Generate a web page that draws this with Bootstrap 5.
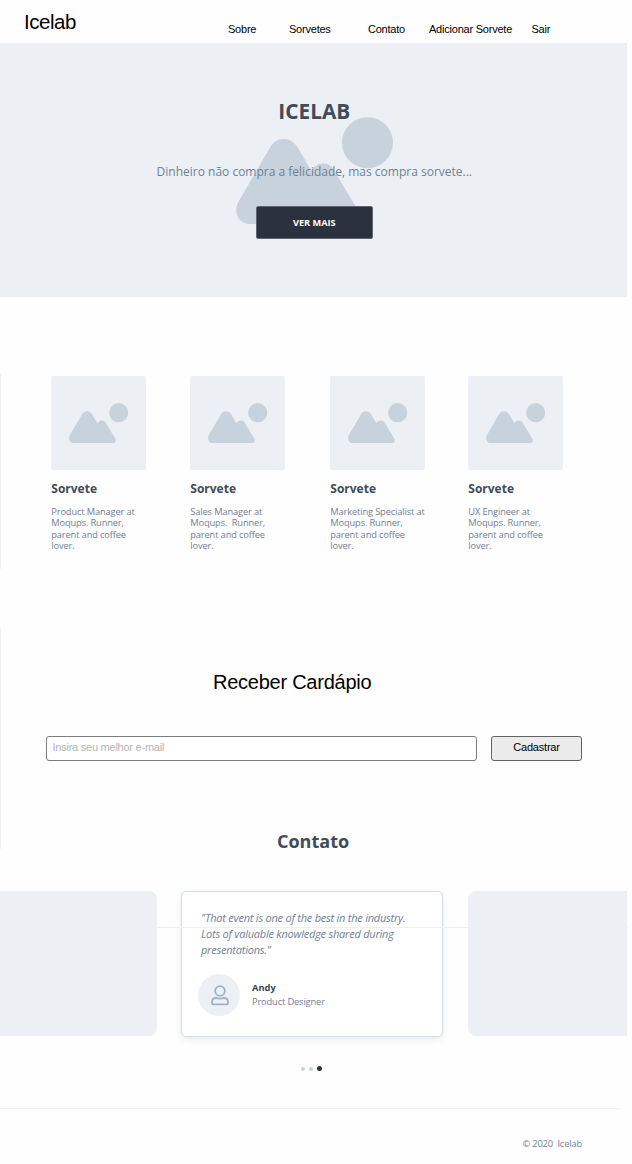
<!DOCTYPE html>
<html lang="pt-br">
<head>
<meta charset="utf-8">
<meta name="viewport" content="width=device-width, initial-scale=1">
<title>Icelab</title>
<link href="https://cdn.jsdelivr.net/npm/bootstrap@5.3.0/dist/css/bootstrap.min.css" rel="stylesheet">
<style>
body{background:#fefefe;font-family:"Open Sans",sans-serif;color:#718096;overflow-x:hidden}
.arial{font-family:"Liberation Sans",Arial,sans-serif;color:#000}
.page{width:627px}
.topbar{height:43px;padding-left:24px}
.brand{font-size:20.5px;line-height:24px;margin-top:10px;width:204px;letter-spacing:-.45px}
.menu{padding-top:22px}
.menu a{font-size:11px;line-height:15px;color:#000;letter-spacing:-.22px;white-space:nowrap}
.menu a:nth-child(1),.menu a:nth-child(3){width:61px}
.menu a:nth-child(2){width:79px}
.menu a:nth-child(4){width:102.5px}
.hero{height:254px;background:#ecf0f4}
.hero-art{left:235.6px;top:74px;width:157px;height:107.3px}
.hero-text{padding-left:1.6px}
.hero h1{font-size:20.8px;line-height:28px;font-weight:700;color:#414b59;margin-top:54px}
.hero p{font-size:12px;line-height:18px;margin-top:38px}
.btn-more{width:117px;height:33px;margin-top:25px;padding:0;background:#2b313d;border:1px solid #5d6672;border-radius:2px;color:#fff;font-size:9.2px;font-weight:700}
.products{margin-top:77px;height:195px;border-left:1px solid #f0f0f0;padding:2px 0 0 50.3px}
.product{width:139px}
.product:nth-child(2){width:140px}
.product:nth-child(3){width:138px}
.thumb{width:94.6px;height:94px;background:#ecf0f4;border-radius:2px;padding:26.700px 0 0 17.5px}
.thumb svg{display:block;width:59.3px;height:40.5px}
.product h2{font-size:12px;line-height:16px;font-weight:700;color:#414b59;margin:11px 0 0}
.product p{font-size:9.3px;line-height:11.4px;margin:9px 0 0;white-space:pre;letter-spacing:-.14px}
.signup{margin-top:59px;height:221px;border-left:1px solid #f0f0f0}
.signup h2{font-size:20px;line-height:24px;margin:42px 0 0 212px;letter-spacing:-.25px}
.signup form{margin:42px 0 0 44.5px;gap:14.500px}
.mail{width:431px;height:25px;border:1px solid #7d7d7d;border-radius:3px;padding:0 6px 3px;font-size:11px;letter-spacing:-.24px;background:#fff}
.mail::placeholder{color:#b5b5b5;opacity:1}
.btn-send{width:91px;height:25px;padding:0 0 2px;border:1px solid #636363;border-radius:3px;background:#ebebeb;font-size:11px;letter-spacing:-.2px}
.signup .heading{font:700 18px/24px "Open Sans",sans-serif;letter-spacing:0;color:#414b59;margin:68px 0 0 276px}
.slides{margin-top:42px;height:146px}
.side-l{width:157px;height:145px;background:#ecf0f4;border-radius:0 8px 8px 0;margin-right:24px}
.side-r{width:159px;height:145px;background:#ecf0f4;border-radius:8px 0 0 8px;margin-left:25px}
.quote{width:262px;height:146px;border:1px solid #d5dde7;border-radius:5px;background:#fff;box-shadow:0 3px 6px rgba(60,80,110,.1);padding:18px 0 0 19px}
.quote blockquote{font-size:11px;line-height:16px;font-style:italic;margin:0;white-space:pre;letter-spacing:-.23px}
.avatar{width:42px;height:42px;border-radius:50%;background:#ecf0f4;margin-left:-3px}
.who{font-size:9.3px;line-height:14px;margin-left:12px;letter-spacing:-.14px}
.who b{color:#3c4450;letter-spacing:0}
.rule-mid{left:157px;width:471px;top:36px;height:1px;background:#efefef}
.dots{padding-left:301px;margin-top:29px;height:5px;gap:4px}
.dots i{width:4px;height:4px;border-radius:50%;background:#c8d2dc}
.dots i.on{width:5px;height:5px;background:#2b313d}
footer{width:620px;margin-top:37px;border-top:1px solid #ebeff4;padding:28px 38px 0 0;font-size:9.3px;line-height:14px;white-space:pre;letter-spacing:-.15px}
</style>
</head>
<body>
<svg width="0" height="0" class="d-none"><symbol id="pic" viewBox="287 65 471 322"><path d="M332 387C295 387 277 351 294 320L388 158C407 123 452 122 473 158L513 226C528 201 568 191 587 235L652 343C670 370 650 387 625 387Z" fill="#c8d2dc"/><circle cx="681.500" cy="142" r="76.500" fill="#c8d2dc"/></symbol></svg>
<div class="page">
<header class="topbar d-flex arial"><div class="brand">Icelab</div>
<nav class="menu d-flex"><a class="text-decoration-none">Sobre</a><a class="text-decoration-none">Sorvetes</a><a class="text-decoration-none">Contato</a><a class="text-decoration-none">Adicionar Sorvete</a><a class="text-decoration-none">Sair</a></nav></header>
<section class="hero position-relative"><svg class="hero-art position-absolute"><use href="#pic"/></svg>
<div class="hero-text position-relative d-flex flex-column align-items-center"><h1 class="mb-0">ICELAB</h1><p class="mb-0">Dinheiro não compra a felicidade, mas compra sorvete...</p><button class="btn btn-more">VER MAIS</button></div></section>
<section class="products d-flex">
<article class="product"><div class="thumb"><svg><use href="#pic"/></svg></div><h2>Sorvete</h2><p>Product Manager at
Moqups. Runner,
parent and coffee
lover.</p></article>
<article class="product"><div class="thumb"><svg><use href="#pic"/></svg></div><h2>Sorvete</h2><p>Sales Manager at
Moqups.  Runner,
parent and coffee
lover.</p></article>
<article class="product"><div class="thumb"><svg><use href="#pic"/></svg></div><h2>Sorvete</h2><p>Marketing Specialist at
Moqups. Runner,
parent and coffee
lover.</p></article>
<article class="product"><div class="thumb"><svg><use href="#pic"/></svg></div><h2>Sorvete</h2><p>UX Engineer at
Moqups. Runner,
parent and coffee
lover.</p></article>
</section>
<section class="signup d-flex flex-column arial"><h2>Receber Cardápio</h2><form class="d-flex"><input class="mail arial" type="email" placeholder="Insira seu melhor e-mail"><button type="button" class="btn btn-send arial">Cadastrar</button></form><h2 class="heading">Contato</h2></section>
<section class="slides d-flex position-relative"><div class="side-l"></div>
<div class="quote"><blockquote>"That event is one of the best in the industry.
Lots of valuable knowledge shared during
presentations."</blockquote><div class="d-flex align-items-center mt-3"><div class="avatar d-flex align-items-center justify-content-center"><svg width="19" height="21" viewBox="-1 0 19 21" fill="none" stroke="#9fb0c6" stroke-width="1.800"><circle cx="9" cy="6" r="4.800"/><path d="M1 17.300C1 14.500 3 13 5.200 13C6.800 13 7 13.700 9 13.700S11.200 13 12.800 13C15 13 17 14.500 17 17.300V18.300Q17 19.300 16 19.300H2Q1 19.300 1 18.300Z"/></svg></div><div class="who"><b>Andy</b><br>Product Designer</div></div></div>
<div class="side-r"></div><div class="rule-mid position-absolute"></div></section>
<div class="dots d-flex align-items-center"><i></i><i></i><i class="on"></i></div>
<footer class="text-end">© 2020  Icelab</footer>
</div>
<script src="https://cdn.jsdelivr.net/npm/bootstrap@5.3.0/dist/js/bootstrap.bundle.min.js"></script>
</body>
</html>
